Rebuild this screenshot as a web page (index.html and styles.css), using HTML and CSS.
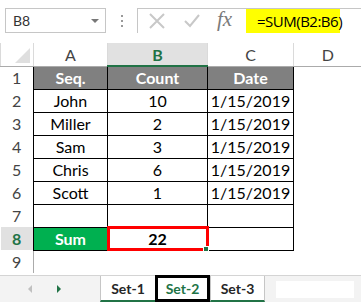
FILE: index.html
```html
<!DOCTYPE html>
<html lang="en">
<head>
    <meta charset="UTF-8">
    <title>Sum</title>
    <link rel="stylesheet" href="styles.css">
</head>
<body>
    <div class="formula-bar">
        <div class="name-box">
            <span>B8</span>
            <span class="drop"></span>
        </div>
        <div class="dots"><i></i><i></i><i></i></div>
        <div class="formula-box">
            <svg class="icon" width="20" height="20" viewBox="0 0 20 20">
                <path d="M3 3 L17 17 M17 3 L3 17" stroke="#c8c8c8" stroke-width="2" fill="none"/>
            </svg>
            <svg class="icon" width="20" height="20" viewBox="0 0 20 20">
                <path d="M3 10 L8 15 L17 4" stroke="#c8c8c8" stroke-width="2" fill="none"/>
            </svg>
            <span class="fx">fx</span>
            <div class="formula">=SUM(B2:B6)</div>
        </div>
    </div>

    <table class="sheet">
        <colgroup>
            <col style="width:33px">
            <col style="width:74px">
            <col style="width:100px">
            <col style="width:86px">
            <col style="width:68px">
        </colgroup>
        <tr class="col-heads">
            <th class="corner"><span class="tri"></span></th>
            <th>A</th>
            <th class="active">B</th>
            <th>C</th>
            <th>D</th>
        </tr>
        <tr>
            <th class="row-head">1</th>
            <td class="cell head">Seq.</td>
            <td class="cell head">Count</td>
            <td class="cell head">Date</td>
            <td></td>
        </tr>
        <tr>
            <th class="row-head">2</th>
            <td class="cell">John</td>
            <td class="cell">10</td>
            <td class="cell">1/15/2019</td>
            <td></td>
        </tr>
        <tr>
            <th class="row-head">3</th>
            <td class="cell">Miller</td>
            <td class="cell">2</td>
            <td class="cell">1/15/2019</td>
            <td></td>
        </tr>
        <tr>
            <th class="row-head">4</th>
            <td class="cell">Sam</td>
            <td class="cell">3</td>
            <td class="cell">1/15/2019</td>
            <td></td>
        </tr>
        <tr>
            <th class="row-head">5</th>
            <td class="cell">Chris</td>
            <td class="cell">6</td>
            <td class="cell">1/15/2019</td>
            <td></td>
        </tr>
        <tr>
            <th class="row-head">6</th>
            <td class="cell">Scott</td>
            <td class="cell">1</td>
            <td class="cell">1/15/2019</td>
            <td></td>
        </tr>
        <tr>
            <th class="row-head">7</th>
            <td class="cell"></td>
            <td class="cell"></td>
            <td class="cell"></td>
            <td></td>
        </tr>
        <tr>
            <th class="row-head active">8</th>
            <td class="cell sum">Sum</td>
            <td class="cell total">22<span class="handle"></span></td>
            <td class="cell"></td>
            <td></td>
        </tr>
        <tr>
            <th class="row-head last">9</th>
            <td></td>
            <td></td>
            <td></td>
            <td></td>
        </tr>
    </table>

    <div class="tab-bar">
        <div class="arrows">
            <span class="arrow left"></span>
            <span class="arrow right"></span>
        </div>
        <div class="tab">Set-1</div>
        <div class="tab current">Set-2</div>
        <div class="tab end">Set-3</div>
        <div class="scroll"></div>
    </div>
</body>
</html>
```

FILE: styles.css
```css
body {
    margin: 0;
    width: 361px;
    height: 302px;
    overflow: hidden;
    background-color: white;
    font-family: Lato, "Open Sans", sans-serif;
    color: #000;
}

/* formula bar */
.formula-bar {
    height: 43px;
    display: flex;
    align-items: flex-start;
    padding-top: 8px;
    box-sizing: border-box;
}

.name-box {
    margin-left: 5px;
    width: 101px;
    height: 25px;
    box-sizing: border-box;
    border: 1px solid #c6c6c6;
    display: flex;
    align-items: center;
    justify-content: space-between;
    padding: 0 6px 0 7px;
    font-size: 14px;
    color: #333;
}

.drop {
    width: 0;
    height: 0;
    border-left: 4px solid transparent;
    border-right: 4px solid transparent;
    border-top: 4px solid #777;
}

.dots {
    width: 31px;
    height: 25px;
    display: flex;
    flex-direction: column;
    align-items: center;
    justify-content: center;
    gap: 3px;
}

.dots i {
    width: 2px;
    height: 2px;
    background-color: #999;
}

.formula-box {
    flex: 1;
    height: 25px;
    box-sizing: border-box;
    border-top: 1px solid #c6c6c6;
    border-left: 1px solid #c6c6c6;
    display: flex;
    align-items: center;
    padding-left: 9px;
}

.icon {
    margin-right: 15px;
}

.fx {
    font-family: "Liberation Serif", serif;
    font-style: italic;
    font-size: 21px;
    color: #7a7a7a;
    width: 24px;
    margin-top: -3px;
    margin-right: 5px;
}

.formula {
    background-color: #ffff00;
    width: 94px;
    height: 24px;
    box-sizing: border-box;
    padding-left: 11px;
    font-size: 15px;
    line-height: 24px;
    font-family: "Open Sans", sans-serif;
    letter-spacing: -0.5px;
}

/* grid */
.sheet {
    border-collapse: collapse;
    table-layout: fixed;
    width: 361px;
}

.sheet td, .sheet th {
    height: 23px;
    padding: 0;
    box-sizing: border-box;
    text-align: center;
    font-size: 16px;
}

.col-heads th {
    font-weight: normal;
    font-size: 16px;
    color: #444;
    border-bottom: 1px solid #ababab;
    border-left: 1px solid #dadada;
}

.col-heads th.active {
    background-color: #e1e1e1;
    color: #217346;
    font-weight: bold;
    border-bottom: 2px solid #217346;
}

.corner {
    position: relative;
}

.tri {
    position: absolute;
    right: 3px;
    bottom: 3px;
    width: 0;
    height: 0;
    border-left: 15px solid transparent;
    border-bottom: 15px solid #dfdfdf;
}

.row-head {
    font-weight: normal;
    font-size: 16px;
    color: #444;
    border-right: 1px solid #000;
}

.row-head.active {
    background-color: #e1e1e1;
    color: #217346;
    font-weight: bold;
}

.row-head.last {
    border-right: 1px solid #ababab;
}

.cell {
    border: 1px solid #000;
}

.cell.head {
    background-color: #808080;
    color: white;
    font-weight: bold;
}

.cell.sum {
    background-color: #00b050;
    color: white;
    font-weight: bold;
}

.cell.total {
    position: relative;
    font-weight: bold;
    outline: 3px solid #ff0000;
    outline-offset: -2px;
}

.handle {
    position: absolute;
    right: -2px;
    bottom: -2px;
    width: 4px;
    height: 4px;
    background-color: #217346;
    border: 1px solid white;
}

/* sheet tabs */
.tab-bar {
    position: absolute;
    left: 0;
    top: 275px;
    width: 361px;
    height: 27px;
    background-color: #f3f3f3;
    border-top: 1px solid #d4d4d4;
    box-sizing: border-box;
    display: flex;
}

.arrows {
    width: 100px;
    display: flex;
    align-items: center;
    padding-left: 28px;
    box-sizing: border-box;
    gap: 25px;
}

.arrow {
    width: 0;
    height: 0;
    border-top: 4px solid transparent;
    border-bottom: 4px solid transparent;
}

.arrow.left {
    border-right: 4px solid #c0c0c0;
}

.arrow.right {
    border-left: 4px solid #217346;
}

.tab {
    width: 55px;
    background-color: white;
    border-left: 1px solid #c6c6c6;
    border-bottom: 2px solid #217346;
    box-sizing: border-box;
    font-size: 14px;
    font-weight: bold;
    color: #262626;
    display: flex;
    align-items: center;
    justify-content: center;
}

.tab.current {
    border: 3px solid #000;
    color: #217346;
    margin-top: -1px;
}

.tab.end {
    border-right: 1px solid #c6c6c6;
}

.scroll {
    margin: 5px 0 4px 11px;
    width: 78px;
    background-color: white;
}
```
